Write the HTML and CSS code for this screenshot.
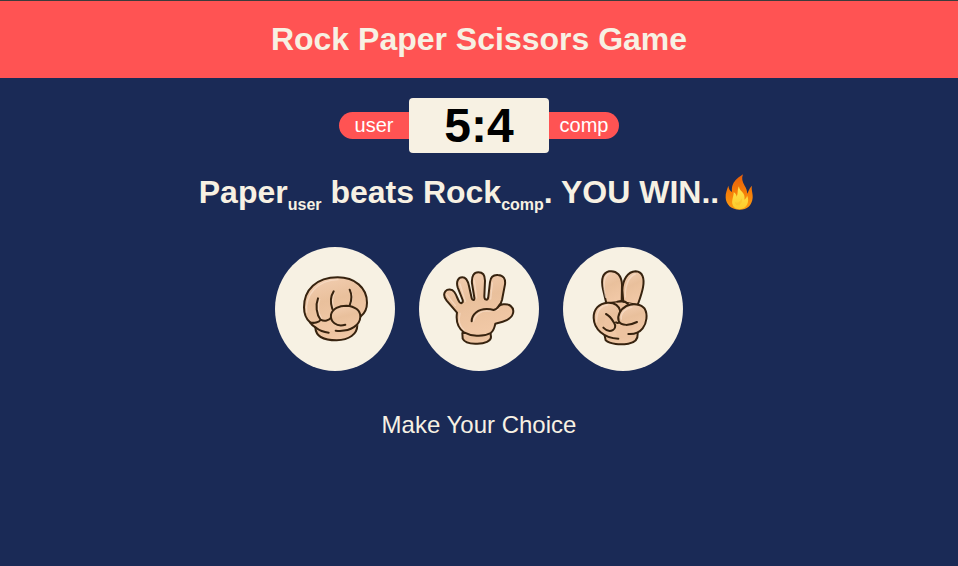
FILE: index.html
```html
<!DOCTYPE html>
<html lang="en">
<head>
<meta charset="utf-8">
<meta name="viewport" content="width=device-width, initial-scale=1">
<title>Rock Paper Scissors Game</title>
<link rel="stylesheet" href="styles.css">
</head>
<body>
<svg class="defs" aria-hidden="true">
  <defs>
    <linearGradient id="skin" x1="0" y1="0" x2="0.3" y2="1">
      <stop offset="0" stop-color="#f3cfb3"/>
      <stop offset="0.5" stop-color="#e9c09c"/>
      <stop offset="1" stop-color="#f1c8a6"/>
    </linearGradient>
    <linearGradient id="flame" x1="0" y1="0" x2="0" y2="1">
      <stop offset="0" stop-color="#e65e0b"/>
      <stop offset="0.5" stop-color="#f47c08"/>
      <stop offset="1" stop-color="#fb9c12"/>
    </linearGradient>
    <linearGradient id="core" x1="0" y1="0" x2="0" y2="1">
      <stop offset="0" stop-color="#ffe34d"/>
      <stop offset="1" stop-color="#fccb2b"/>
    </linearGradient>
  </defs>
</svg>
<header class="header">
  <h1>Rock Paper Scissors Game</h1>
</header>
<main class="game">
  <div class="scoreboard">
    <span class="player player-user">user</span>
    <strong class="score">5:4</strong>
    <span class="player player-comp">comp</span>
  </div>
  <h2 class="result">Paper<sub>user</sub> beats Rock<sub>comp</sub>. YOU WIN..<svg class="fire" viewBox="15 13 120 120" role="img" aria-label="Fire">
    <path fill="url(#flame)" d="M87 20C82 32 85 43 92 54C97 62 100 70 99 78C104 73 104 63 114 54C111 66 117 76 116 90C114 113 99 126 77 126C53 126 36 111 35 90C34 76 39 67 43 54C44 63 48 70 54 73C52 55 58 43 69 33C76 27 82 24 87 20Z"/>
    <path fill="url(#core)" d="M75 56C75 67 86 72 90 81C92 86 92 91 91 96C96 93 99 88 99 83C108 102 99 124 77 125C60 124 52 112 55 97C57 88 59 82 59 74C65 77 67 82 68 87C73 78 69 67 75 56Z"/>
    <path fill="#f9b928" d="M83 92C86 101 82 108 76 112C69 115 64 111 63 103C68 107 73 105 76 102C80 99 82 96 83 92Z" opacity=".5"/>
  </svg></h2>
  <div class="choices">
    <button class="choice" type="button" aria-label="Rock">
      <svg class="hand" viewBox="15 21 360 372" aria-hidden="true">
        <path class="fill" d="M136 262C137 285 154 301 200 301C237 300 262 283 262 255L250 235L130 245Z"/>
        <path class="fill" d="M120 247C106 235 102 219 102 202C102 150 139 112 203 112C254 112 291 143 291 188C291 207 284 220 272 229C272 249 264 258 248 267C222 276 168 275 145 266C135 262 127 256 120 247Z" stroke="none"/>
        <path class="line" d="M136 262Q126 256 120 247C106 235 102 219 102 202C102 150 139 112 203 112C254 112 291 143 291 188C291 207 284 220 272 229"/>
        <path class="glow" d="M149 178C142 198 145 222 155 236M193 158C185 176 187 196 193 205M243 154C250 170 246 187 240 195M110 217C105 164 143 120 204 119"/>
        <path class="line" d="M144 175C136 196 139 222 152 240M191 154C180 171 181 189 187 207M239 149C247 166 245 182 239 196M120 247C132 251 147 247 152 239C163 245 178 242 184 232"/>
        <path class="fill" d="M225 256C191 261 178 239 184 219C190 204 207 197 228 197C254 197 272 211 271 230C270 251 249 272 215 274Q205 274 197 272Z" stroke="none"/>
        <path class="line" d="M226 254C199 262 180 245 183 224C187 205 208 197 229 197C255 198 272 212 271 231C270 253 245 277 197 272M136 262C147 271 160 277 176 278"/>
      </svg>
    </button>
    <button class="choice" type="button" aria-label="Paper">
      <svg class="hand" viewBox="15 21 360 372" aria-hidden="true">
        <path class="fill" d="M145 279L146 296C151 307 169 312 190 311C213 311 231 303 231 291L229 276Z"/>
        <path class="fill" d="M129 218L98 182C91 173 88 162 94 154C101 146 114 147 121 156C128 165 131 180 137 187C142 192 148 188 146 180L131 142C126 125 132 112 145 112C158 112 162 124 165 138L173 174C175 183 182 182 181 173L174 130C172 108 180 97 193 97C207 97 213 107 213 122L211 169C211 182 222 182 223 170L228 126C230 109 240 104 252 105C269 106 275 117 273 133L264 180Q261 190 256 197Q260 194 268 193C287 191 297 201 298 213C298 228 284 240 266 245L244 251C242 261 240 272 230 279C205 293 170 288 150 277C131 264 125 245 129 218Z"/>
        <path class="glow" d="M138 220C132 244 139 261 150 270M98 164L124 197M138 132L154 184M181 121L188 174M235 129L230 177M179 243C182 224 202 211 224 213L254 208"/>
        <path class="line" d="M173 244C173 223 193 207 218 207Q230 207 239 210C250 207 253 201 257 194"/>
      </svg>
    </button>
    <button class="choice" type="button" aria-label="Scissors">
      <svg class="hand" viewBox="15 21 360 372" aria-hidden="true">
        <path class="fill" d="M139 282L143 301C157 313 187 315 211 311C229 308 240 298 239 282L239 267L160 260Z"/>
        <path class="fill" d="M145 190L135 148C129 120 134 99 153 94C177 90 191 108 192 134L191 185Z"/>
        <path class="fill" d="M196 187L193 151C194 118 209 95 233 94C254 95 260 115 255 142C251 163 244 180 239 195Z"/>
        <path fill="#edc3a0" d="M141 195L178 187L215 190L253 200L265 240L250 270L220 290L165 291L125 273Z"/>
        <path class="line" d="M178 185C190 181 203 184 210 192"/>
        <path class="fill" d="M144 222C158 229 166 240 174 249L182 248L187 218C184 197 168 187 149 188C123 190 107 208 107 233C107 260 121 279 142 288L180 293L170 270C160 276 146 276 136 265Z" stroke="none"/>
        <path class="line" d="M144 222C154 227 161 236 168 248C181 267 156 284 136 263M187 213C182 195 168 187 149 188C122 190 106 209 107 234C108 267 137 294 181 296"/>
        <path class="fill" d="M237 246C214 257 189 259 182 242C177 226 188 207 205 198C224 189 250 192 260 206C270 223 266 250 254 265C243 279 227 283 211 282Z" stroke="none"/>
        <path class="line" d="M237 246C215 257 190 259 182 243C177 226 188 207 205 198C224 189 250 192 260 206C270 223 266 250 254 265C243 279 227 283 211 282M187 213L184 220M174 247Q180 252 184 246"/>
        <path class="glow" d="M143 172C135 139 136 108 154 101M202 171C200 138 213 108 232 102M116 246C115 215 126 198 148 195M190 237C187 219 203 205 222 201"/>
      </svg>
    </button>
  </div>
  <p class="prompt">Make Your Choice</p>
</main>
</body>
</html>
```
FILE: styles.css
```css
* {
  box-sizing: border-box;
  margin: 0;
  padding: 0;
}

body {
  min-height: 100vh;
  background: #1a2a56;
  color: #f7f1e3;
  font-family: "Liberation Sans", Arial, sans-serif;
  text-align: center;
}

.defs {
  position: absolute;
  width: 0;
  height: 0;
}

.header {
  padding: 20px;
  border-top: 1px solid #3c3c3c;
  background: #ff5353;
}

.header h1 {
  font-size: 32px;
  line-height: 37px;
}

.game {
  padding: 20px 0;
}

.scoreboard {
  display: flex;
  justify-content: center;
  align-items: center;
}

.player {
  width: 70px;
  padding: 2px 0;
  background: #ff5353;
  color: #fff;
  font-size: 20px;
  line-height: 23px;
}

.player-user {
  border-radius: 14px 0 0 14px;
}

.player-comp {
  border-radius: 0 14px 14px 0;
}

.score {
  width: 140px;
  border-radius: 4px;
  background: #f7f1e3;
  color: #000;
  font-size: 48px;
  line-height: 55px;
}

.result {
  margin-top: 19px;
  font-size: 32px;
  line-height: 38px;
}

.result sub {
  font-size: 16px;
  line-height: 1;
}

.fire {
  width: 40px;
  height: 40px;
  vertical-align: -9px;
}

.choices {
  display: flex;
  justify-content: center;
  gap: 24px;
  margin-top: 34px;
}

.choice {
  width: 120px;
  height: 124px;
  border: 0;
  border-radius: 50%;
  background: #f7f1e3;
  cursor: pointer;
}

.hand {
  display: block;
  width: 100%;
  height: 100%;
}

.hand path {
  stroke-linecap: round;
  stroke-linejoin: round;
}

.fill {
  fill: url(#skin);
  stroke: #37230f;
  stroke-width: 6;
}

.fill[stroke="none"] {
  stroke: none;
}

.line {
  fill: none;
  stroke: #37230f;
  stroke-width: 6;
}

.glow {
  fill: none;
  stroke: #fae3d0;
  stroke-width: 4;
  opacity: 0.6;
}

.prompt {
  margin-top: 40px;
  font-size: 24px;
  line-height: 28px;
}
```
